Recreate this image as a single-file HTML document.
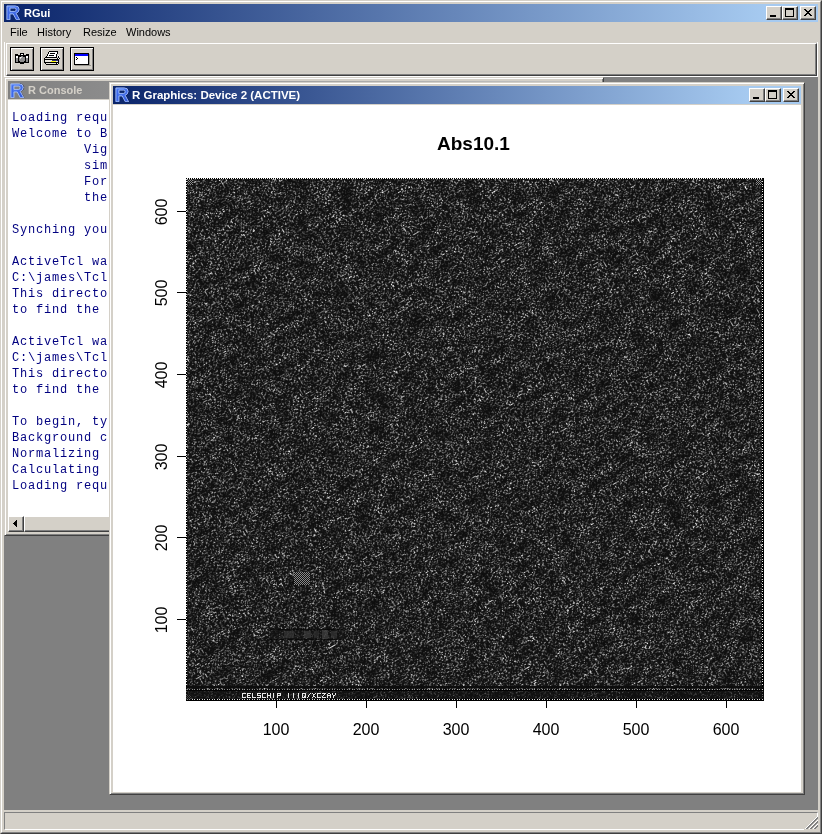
<!DOCTYPE html>
<html><head><meta charset="utf-8">
<style>
*{margin:0;padding:0;box-sizing:border-box}
html,body{width:822px;height:834px;overflow:hidden;background:#d4d0c8;font-family:"Liberation Sans",sans-serif}
.a{position:absolute}
.cap,.mono,.menu,.lab,.ttl{will-change:transform}
.cap{color:#fff;font-weight:bold;font-size:11px;line-height:18px;white-space:nowrap}
.btn{position:absolute;width:16px;height:14px;background:#d4d0c8;border-top:1px solid #fff;border-left:1px solid #fff;border-right:1px solid #404040;border-bottom:1px solid #404040;box-shadow:inset -1px -1px 0 #808080}
.mono{font-family:"Liberation Mono",monospace;font-size:12px;letter-spacing:0.8px;line-height:16px;color:#000080;white-space:pre}
.menu{font-size:11px;color:#000;white-space:nowrap;line-height:13px}
.tb{position:absolute;width:24px;height:24px;border:1px solid #000;background:#d4d0c8;box-shadow:inset 1px 1px 0 #fff, inset -1px -1px 0 #808080}
.lab{font-size:16px;color:#000;white-space:nowrap;line-height:16px}
</style></head><body>
<svg width="0" height="0" style="position:absolute">
<defs>
<linearGradient id="rg1" x1="0" y1="0" x2="1" y2="1"><stop offset="0" stop-color="#5f8cf8"/><stop offset="1" stop-color="#2a52d8"/></linearGradient>
<symbol id="rlg" viewBox="0 0 15 16">
<path fill="none" stroke="#000a40" stroke-width="0.8" stroke-dasharray="0.8 0.8" d="M10.3 0.8Q14.3 1.2 14.2 4.5Q14 7.6 11 8.8L14.8 15.6"/>
<path fill="url(#rg1)" fill-rule="evenodd" stroke="#a8c4ff" stroke-width="0.9" d="M0.9 0.9H9.5Q13.5 0.9 13.5 4.4Q13.5 7.5 10.4 8.5L14 15.1H10.6L7.4 9.2H4.1V15.1H0.9ZM4.1 3.2V6.6H9.1Q10.4 6.6 10.4 4.9Q10.4 3.2 9.1 3.2Z"/>
<path fill="none" stroke="#3a64e8" stroke-width="0.9" d="M2.4 2.6V14.2"/>
</symbol>
</defs></svg>

<div class="a" style="left:0;top:0;width:822px;height:834px;border-top:1px solid #d4d0c8;border-left:1px solid #d4d0c8;border-right:1px solid #404040;border-bottom:1px solid #404040"></div>
<div class="a" style="left:1px;top:1px;width:820px;height:832px;border-top:1px solid #fff;border-left:1px solid #fff;border-right:1px solid #808080;border-bottom:1px solid #808080"></div>
<div class="a" style="left:4px;top:4px;width:814px;height:18px;background:linear-gradient(to right,#0a246a,#a6caf0 93.4%)"></div>
<svg class="a" style="left:6.4px;top:4.6px" width="14.6" height="15.6" viewBox="0 0 15 16" preserveAspectRatio="none"><use href="#rlg"/></svg>
<div class="a cap" style="left:24px;top:4px">RGui</div>
<div class="btn" style="left:766px;top:6px"></div>
<svg class="a" style="left:770px;top:15px;" width="6" height="2" shape-rendering="crispEdges"><path fill="#000" d="M0 0h6v1h-6zM0 1h6v1h-6z"/></svg>
<div class="btn" style="left:782px;top:6px"></div>
<svg class="a" style="left:785px;top:8px;" width="9" height="9" shape-rendering="crispEdges"><path fill="#000" d="M0 0h9v1h-9zM0 1h9v1h-9zM0 2h1v1h-1zM8 2h1v1h-1zM0 3h1v1h-1zM8 3h1v1h-1zM0 4h1v1h-1zM8 4h1v1h-1zM0 5h1v1h-1zM8 5h1v1h-1zM0 6h1v1h-1zM8 6h1v1h-1zM0 7h1v1h-1zM8 7h1v1h-1zM0 8h9v1h-9z"/></svg>
<div class="btn" style="left:800px;top:6px"></div>
<svg class="a" style="left:804px;top:9px;" width="8" height="7" shape-rendering="crispEdges"><path fill="#000" d="M0 0h2v1h-2zM6 0h2v1h-2zM1 1h2v1h-2zM5 1h2v1h-2zM2 2h4v1h-4zM3 3h2v1h-2zM2 4h4v1h-4zM1 5h2v1h-2zM5 5h2v1h-2zM0 6h2v1h-2zM6 6h2v1h-2z"/></svg>
<div class="a menu" style="left:10px;top:26px">File</div>
<div class="a menu" style="left:37px;top:26px">History</div>
<div class="a menu" style="left:83px;top:26px">Resize</div>
<div class="a menu" style="left:126px;top:26px">Windows</div>
<div class="a" style="left:4px;top:42px;width:1px;height:35px;background:#fff"></div>
<div class="a" style="left:817px;top:42px;width:1px;height:35px;background:#fff"></div>
<div class="a" style="left:4px;top:76px;width:814px;height:1px;background:#fff"></div>
<div class="a" style="left:6px;top:43px;width:811px;height:33px;border-top:1px solid #fff;border-left:1px solid #fff;border-right:1px solid #404040;border-bottom:1px solid #404040;box-shadow:inset -1px -1px 0 #808080"></div>
<div class="tb" style="left:10px;top:47px"></div>
<svg class="a" style="left:15px;top:53px;" width="14" height="11" shape-rendering="crispEdges"><path fill="#000" d="M5 0h4v1h-4zM0 1h3v1h-3zM5 1h1v1h-1zM8 1h1v1h-1zM11 1h3v1h-3zM0 2h14v1h-14zM0 3h1v1h-1zM3 3h3v1h-3zM8 3h3v1h-3zM13 3h1v1h-1zM0 4h1v1h-1zM3 4h1v1h-1zM10 4h1v1h-1zM13 4h1v1h-1zM0 5h1v1h-1zM3 5h1v1h-1zM10 5h1v1h-1zM13 5h1v1h-1zM0 6h1v1h-1zM3 6h1v1h-1zM10 6h1v1h-1zM13 6h1v1h-1zM0 7h1v1h-1zM3 7h1v1h-1zM10 7h1v1h-1zM13 7h1v1h-1zM0 8h1v1h-1zM3 8h2v1h-2zM9 8h2v1h-2zM13 8h1v1h-1zM0 9h14v1h-14zM5 10h4v1h-4z"/><path fill="#fff" d="M6 1h2v1h-2zM1 3h2v1h-2zM11 3h2v1h-2zM1 4h2v1h-2zM5 4h1v1h-1zM11 4h2v1h-2z"/><path fill="#8c8c8c" d="M6 3h2v1h-2zM4 4h1v1h-1zM7 4h3v1h-3zM1 5h2v1h-2zM4 5h1v1h-1zM6 5h4v1h-4zM11 5h2v1h-2zM1 6h2v1h-2zM4 6h6v1h-6zM11 6h2v1h-2zM1 7h2v1h-2zM4 7h6v1h-6zM11 7h2v1h-2zM1 8h2v1h-2zM5 8h4v1h-4zM11 8h2v1h-2z"/><path fill="#d8d8d8" d="M6 4h1v1h-1zM5 5h1v1h-1z"/></svg>
<div class="tb" style="left:40px;top:47px"></div>
<svg class="a" style="left:44px;top:51px;" width="16" height="14" shape-rendering="crispEdges"><path fill="#000" d="M5 0h9v1h-9zM4 1h1v1h-1zM13 1h1v1h-1zM4 2h1v1h-1zM6 2h5v1h-5zM13 2h1v1h-1zM3 3h1v1h-1zM12 3h1v1h-1zM3 4h1v1h-1zM5 4h5v1h-5zM12 4h1v1h-1zM2 5h1v1h-1zM12 5h1v1h-1zM14 5h1v1h-1zM1 6h12v1h-12zM14 6h1v1h-1zM0 7h1v1h-1zM13 7h1v1h-1zM15 7h1v1h-1zM0 8h15v1h-15zM0 9h1v1h-1zM14 9h1v1h-1zM0 10h1v1h-1zM14 10h1v1h-1zM0 11h15v1h-15zM1 12h1v1h-1zM12 12h1v1h-1zM14 12h1v1h-1zM2 13h12v1h-12z"/><path fill="#fff" d="M5 1h8v1h-8zM5 2h1v1h-1zM11 2h2v1h-2zM4 3h8v1h-8zM4 4h1v1h-1zM10 4h2v1h-2zM14 4h1v1h-1zM3 5h9v1h-9zM13 5h1v1h-1zM15 5h1v1h-1zM14 7h1v1h-1zM13 12h1v1h-1z"/><path fill="#e8e4dc" d="M1 7h12v1h-12zM1 9h7v1h-7zM1 10h6v1h-6zM12 10h2v1h-2zM2 12h10v1h-10z"/><path fill="#303070" d="M8 9h6v1h-6z"/><path fill="#ffff00" d="M7 10h5v1h-5z"/></svg>
<div class="tb" style="left:70px;top:47px"></div>
<svg class="a" style="left:74px;top:53px;" width="17" height="13" shape-rendering="crispEdges"><path fill="#000" d="M0 0h15v1h-15zM0 1h1v1h-1zM14 1h1v1h-1zM0 2h1v1h-1zM14 2h1v1h-1zM0 3h1v1h-1zM14 3h1v1h-1zM0 4h1v1h-1zM2 4h1v1h-1zM14 4h1v1h-1zM0 5h1v1h-1zM3 5h1v1h-1zM14 5h1v1h-1zM0 6h1v1h-1zM2 6h1v1h-1zM14 6h1v1h-1zM0 7h1v1h-1zM14 7h1v1h-1zM0 8h1v1h-1zM14 8h1v1h-1zM0 9h1v1h-1zM14 9h1v1h-1zM0 10h1v1h-1zM14 10h1v1h-1zM0 11h15v1h-15z"/><path fill="#fff" d="M1 3h13v1h-13zM1 4h1v1h-1zM3 4h11v1h-11zM1 5h2v1h-2zM4 5h10v1h-10zM1 6h1v1h-1zM3 6h11v1h-11zM1 7h13v1h-13zM1 8h13v1h-13zM1 9h13v1h-13zM1 10h13v1h-13z"/><path fill="#0000ff" d="M1 1h13v1h-13zM1 2h13v1h-13z"/><path fill="#9a9890" d="M15 1h1v1h-1zM15 2h1v1h-1zM15 3h1v1h-1zM15 4h1v1h-1zM15 5h1v1h-1zM15 6h1v1h-1zM15 7h1v1h-1zM15 8h1v1h-1zM15 9h1v1h-1zM15 10h1v1h-1zM15 11h1v1h-1zM1 12h16v1h-16z"/></svg>
<div class="a" style="left:4px;top:77px;width:814px;height:733px;background:#808080"></div>
<div class="a" style="left:4px;top:812px;width:814px;height:18px;border-top:1px solid #808080;border-left:1px solid #808080;border-right:1px solid #fff;border-bottom:1px solid #fff"></div>
<svg class="a" style="left:804px;top:817px;" width="14" height="13" shape-rendering="crispEdges"><path fill="#fff" d="M12 0h1v1h-1zM11 1h1v1h-1zM10 2h1v1h-1zM9 3h1v1h-1zM13 3h1v1h-1zM8 4h1v1h-1zM12 4h1v1h-1zM7 5h1v1h-1zM11 5h1v1h-1zM6 6h1v1h-1zM10 6h1v1h-1zM5 7h1v1h-1zM9 7h1v1h-1zM13 7h1v1h-1zM4 8h1v1h-1zM8 8h1v1h-1zM12 8h1v1h-1zM3 9h1v1h-1zM7 9h1v1h-1zM11 9h1v1h-1zM2 10h1v1h-1zM6 10h1v1h-1zM10 10h1v1h-1zM1 11h1v1h-1zM5 11h1v1h-1zM9 11h1v1h-1z"/><path fill="#808080" d="M13 0h1v1h-1zM12 1h2v1h-2zM11 2h2v1h-2zM10 3h2v1h-2zM9 4h2v1h-2zM13 4h1v1h-1zM8 5h2v1h-2zM12 5h2v1h-2zM7 6h2v1h-2zM11 6h2v1h-2zM6 7h2v1h-2zM10 7h2v1h-2zM5 8h2v1h-2zM9 8h2v1h-2zM13 8h1v1h-1zM4 9h2v1h-2zM8 9h2v1h-2zM12 9h2v1h-2zM3 10h2v1h-2zM7 10h2v1h-2zM11 10h2v1h-2zM2 11h2v1h-2zM6 11h2v1h-2zM10 11h2v1h-2z"/><path fill="#d4d0c8" d="M13 2h1v1h-1zM12 3h1v1h-1zM11 4h1v1h-1zM10 5h1v1h-1zM9 6h1v1h-1zM13 6h1v1h-1zM8 7h1v1h-1zM12 7h1v1h-1zM7 8h1v1h-1zM11 8h1v1h-1zM6 9h1v1h-1zM10 9h1v1h-1zM5 10h1v1h-1zM9 10h1v1h-1zM13 10h1v1h-1zM4 11h1v1h-1zM8 11h1v1h-1zM12 11h2v1h-2zM0 12h14v1h-14z"/></svg>
<div class="a" style="left:4px;top:77px;width:600px;height:459px;background:#d4d0c8;border-top:1px solid #d4d0c8;border-left:1px solid #d4d0c8;border-right:1px solid #404040;border-bottom:1px solid #404040;box-shadow:inset 1px 1px 0 #fff, inset -1px -1px 0 #808080"></div>
<div class="a" style="left:8px;top:81px;width:592px;height:18px;background:linear-gradient(to right,#808080,#c0c0c0 91%)"></div>
<svg class="a" style="left:10.4px;top:82.6px" width="14.6" height="15.6" viewBox="0 0 15 16" preserveAspectRatio="none"><use href="#rlg"/></svg>
<div class="a cap" style="left:28px;top:81px;color:#d4d0c8">R Console</div>
<div class="a" style="left:8px;top:100px;width:592px;height:416px;background:#fff;overflow:hidden">
<div style="position:absolute;left:0;top:0;width:100px;height:416px;overflow:hidden"><div class="mono" style="position:absolute;left:4px;top:10px">Loading required package: Biobase
Welcome to Bioconductor
         Vignettes contain introductory material.  To view,
         simply type: openVignette()
         For details on reading vignettes, see
         the openVignette help page.

Synching your local package management information ...

ActiveTcl was not found at C:/james/Tcl
C:\james\Tcl does not exist or does not contain the Tcl lib.
This directory is used by tcltk to find the Tcl/Tk
to find the tcl/tk libraries.

ActiveTcl was not found at C:/james/Tcl
C:\james\Tcl does not exist or does not contain the Tcl lib.
This directory is used by tcltk to find the Tcl/Tk
to find the tcl/tk libraries.

To begin, type help(affy)
Background correcting
Normalizing
Calculating expression
Loading required package: affy</div></div>
</div>
<div class="a" style="left:8px;top:516px;width:592px;height:16px;background:#d4d0c8"></div>
<div class="btn" style="left:8px;top:516px;width:16px;height:16px"></div>
<svg class="a" style="left:13px;top:520px;" width="4" height="7" shape-rendering="crispEdges"><path fill="#000" d="M3 0h1v1h-1zM2 1h2v1h-2zM1 2h3v1h-3zM0 3h4v1h-4zM1 4h3v1h-3zM2 5h2v1h-2zM3 6h1v1h-1z"/></svg>
<div class="btn" style="left:24px;top:516px;width:120px;height:16px"></div>
<div class="a" style="left:109px;top:82px;width:696px;height:713px;background:#d4d0c8;border-top:1px solid #d4d0c8;border-left:1px solid #d4d0c8;border-right:1px solid #404040;border-bottom:1px solid #404040;box-shadow:inset 1px 1px 0 #fff, inset -1px -1px 0 #808080"></div>
<div class="a" style="left:113px;top:86px;width:688px;height:18px;background:linear-gradient(to right,#0a246a,#a6caf0 92.2%)"></div>
<svg class="a" style="left:115.4px;top:86.6px" width="14.6" height="15.6" viewBox="0 0 15 16" preserveAspectRatio="none"><use href="#rlg"/></svg>
<div class="a cap" style="left:132px;top:86px;font-size:11.5px">R Graphics: Device 2 (ACTIVE)</div>
<div class="btn" style="left:749px;top:88px"></div>
<svg class="a" style="left:753px;top:97px;" width="6" height="2" shape-rendering="crispEdges"><path fill="#000" d="M0 0h6v1h-6zM0 1h6v1h-6z"/></svg>
<div class="btn" style="left:765px;top:88px"></div>
<svg class="a" style="left:768px;top:90px;" width="9" height="9" shape-rendering="crispEdges"><path fill="#000" d="M0 0h9v1h-9zM0 1h9v1h-9zM0 2h1v1h-1zM8 2h1v1h-1zM0 3h1v1h-1zM8 3h1v1h-1zM0 4h1v1h-1zM8 4h1v1h-1zM0 5h1v1h-1zM8 5h1v1h-1zM0 6h1v1h-1zM8 6h1v1h-1zM0 7h1v1h-1zM8 7h1v1h-1zM0 8h9v1h-9z"/></svg>
<div class="btn" style="left:783px;top:88px"></div>
<svg class="a" style="left:787px;top:91px;" width="8" height="7" shape-rendering="crispEdges"><path fill="#000" d="M0 0h2v1h-2zM6 0h2v1h-2zM1 1h2v1h-2zM5 1h2v1h-2zM2 2h4v1h-4zM3 3h2v1h-2zM2 4h4v1h-4zM1 5h2v1h-2zM5 5h2v1h-2zM0 6h2v1h-2zM6 6h2v1h-2z"/></svg>
<div class="a" style="left:113px;top:105px;width:688px;height:687px;background:#fff"></div>
<svg class="a" style="left:186px;top:178px" width="578" height="523">
<defs>
<filter id="nz" x="-300" y="-300" width="1600" height="1600" color-interpolation-filters="sRGB" filterUnits="userSpaceOnUse">
<feTurbulence type="fractalNoise" baseFrequency="0.055 0.12" numOctaves="4" seed="5" result="t1"/>
<feColorMatrix in="t1" type="matrix" values="1.25 0 0 0 -0.12  1.25 0 0 0 -0.12  1.25 0 0 0 -0.12  0 0 0 0 1" result="m"/>
<feTurbulence type="fractalNoise" baseFrequency="0.55 0.75" numOctaves="2" seed="9" result="t2"/>
<feColorMatrix in="t2" type="matrix" values="5.5 0 0 0 -2.91  5.5 0 0 0 -2.91  5.5 0 0 0 -2.91  0 0 0 0 1" result="s"/>
<feComposite in="m" in2="s" operator="arithmetic" k1="1.05" k2="0.03" k3="0.03" k4="0.05"/>
</filter>
</defs>
<g transform="rotate(-30 289 262)"><rect x="-400" y="-400" width="1400" height="1400" filter="url(#nz)"/></g>
</svg>
<svg class="a" style="left:186px;top:178px" width="578" height="523" shape-rendering="crispEdges">
<defs>
<pattern id="chk2" width="2" height="2" patternUnits="userSpaceOnUse"><rect width="2" height="2" fill="#111"/><rect width="1" height="1" fill="#888"/><rect x="1" y="1" width="1" height="1" fill="#888"/></pattern>
<pattern id="hd" width="2" height="1" patternUnits="userSpaceOnUse"><rect width="1" height="1" fill="#000"/><rect x="1" width="1" height="1" fill="#fff"/></pattern>
<pattern id="vd" width="1" height="2" patternUnits="userSpaceOnUse"><rect width="1" height="1" fill="#000"/><rect y="1" width="1" height="1" fill="#fff"/></pattern>
<pattern id="hd2" width="5" height="1" patternUnits="userSpaceOnUse"><rect width="5" height="1" fill="#000"/><rect x="1" width="1" height="1" fill="#e0e0e0"/><rect x="3" width="1" height="1" fill="#e0e0e0"/></pattern>
<pattern id="vd2" width="1" height="5" patternUnits="userSpaceOnUse"><rect width="1" height="5" fill="#000"/><rect y="1" width="1" height="1" fill="#e0e0e0"/><rect y="3" width="1" height="1" fill="#e0e0e0"/></pattern>
</defs>
<rect x="0" y="0" width="578" height="1" fill="url(#hd)"/>
<rect x="0" y="0" width="1" height="523" fill="url(#vd2)"/>
<rect x="577" y="0" width="1" height="523" fill="#000"/>
<rect x="576" y="2" width="1" height="520" fill="url(#vd2)"/>
<rect x="0" y="522" width="578" height="1" fill="#000"/>
<rect x="0" y="521" width="577" height="1" fill="url(#hd2)"/>
<rect x="0" y="517" width="5" height="5" fill="url(#chk2)"/>
<rect x="1" y="1" width="6" height="6" fill="url(#chk2)"/>
<rect x="570" y="1" width="6" height="6" fill="url(#chk2)"/>
<rect x="0" y="508" width="578" height="2" fill="#0c0c0c"/>
<rect x="0" y="511" width="578" height="1" fill="url(#hd2)" opacity="0.6"/>
<rect x="0" y="512" width="578" height="1" fill="#050505"/>
<rect x="0" y="513" width="578" height="8" fill="#101010" opacity="0.6"/>
<rect x="108" y="394" width="16" height="13" fill="url(#chk2)"/>
<rect x="84" y="451" width="74" height="1" fill="#050505" opacity="0.7"/>
<rect x="84" y="452" width="74" height="9" fill="#141414" opacity="0.55"/>
<rect x="98" y="453" width="10" height="7" fill="#3a3a3a" opacity="0.6"/>
<rect x="118" y="453" width="7" height="7" fill="#444" opacity="0.6"/>
<rect x="128" y="453" width="5" height="7" fill="#333" opacity="0.6"/>
<rect x="136" y="452" width="6" height="9" fill="#4a4a4a" opacity="0.6"/>
<rect x="145" y="453" width="6" height="7" fill="#3a3a3a" opacity="0.6"/>
<rect x="84" y="461" width="74" height="1" fill="#050505" opacity="0.7"/>
</svg>
<svg class="a" style="left:242px;top:693px;" width="95" height="5" shape-rendering="crispEdges"><path fill="#e8e8e8" d="M0 0h4v1h-4zM5 0h4v1h-4zM10 0h1v1h-1zM15 0h4v1h-4zM20 0h4v1h-4zM25 0h1v1h-1zM28 0h1v1h-1zM31 0h1v1h-1zM35 0h4v1h-4zM46 0h1v1h-1zM51 0h1v1h-1zM56 0h1v1h-1zM60 0h4v1h-4zM68 0h1v1h-1zM70 0h1v1h-1zM73 0h1v1h-1zM75 0h4v1h-4zM80 0h4v1h-4zM86 0h2v1h-2zM90 0h1v1h-1zM93 0h1v1h-1zM0 1h1v1h-1zM5 1h1v1h-1zM10 1h1v1h-1zM15 1h1v1h-1zM20 1h1v1h-1zM25 1h1v1h-1zM28 1h1v1h-1zM31 1h1v1h-1zM35 1h1v1h-1zM38 1h1v1h-1zM46 1h1v1h-1zM51 1h1v1h-1zM56 1h1v1h-1zM60 1h1v1h-1zM63 1h1v1h-1zM67 1h1v1h-1zM71 1h2v1h-2zM75 1h1v1h-1zM82 1h1v1h-1zM85 1h1v1h-1zM88 1h1v1h-1zM90 1h1v1h-1zM93 1h1v1h-1zM0 2h1v1h-1zM5 2h3v1h-3zM10 2h1v1h-1zM15 2h4v1h-4zM20 2h1v1h-1zM25 2h4v1h-4zM31 2h1v1h-1zM35 2h4v1h-4zM46 2h1v1h-1zM51 2h1v1h-1zM56 2h1v1h-1zM60 2h1v1h-1zM63 2h1v1h-1zM66 2h1v1h-1zM71 2h1v1h-1zM75 2h1v1h-1zM81 2h1v1h-1zM85 2h4v1h-4zM91 2h2v1h-2zM0 3h1v1h-1zM5 3h1v1h-1zM10 3h1v1h-1zM18 3h1v1h-1zM20 3h1v1h-1zM25 3h1v1h-1zM28 3h1v1h-1zM31 3h1v1h-1zM35 3h1v1h-1zM46 3h1v1h-1zM51 3h1v1h-1zM56 3h1v1h-1zM60 3h1v1h-1zM62 3h2v1h-2zM66 3h1v1h-1zM71 3h2v1h-2zM75 3h1v1h-1zM80 3h1v1h-1zM85 3h1v1h-1zM88 3h1v1h-1zM91 3h1v1h-1zM0 4h4v1h-4zM5 4h4v1h-4zM10 4h4v1h-4zM15 4h4v1h-4zM20 4h4v1h-4zM25 4h1v1h-1zM28 4h1v1h-1zM31 4h1v1h-1zM35 4h1v1h-1zM46 4h1v1h-1zM51 4h1v1h-1zM56 4h1v1h-1zM60 4h4v1h-4zM65 4h1v1h-1zM70 4h1v1h-1zM73 4h1v1h-1zM75 4h4v1h-4zM80 4h4v1h-4zM85 4h1v1h-1zM88 4h1v1h-1zM91 4h1v1h-1z"/></svg>
<div class="a ttl" style="left:437px;top:132px;font-size:19px;font-weight:bold;line-height:24px">Abs10.1</div>
<div class="a" style="left:276px;top:701px;width:1px;height:7px;background:#000"></div>
<div class="a lab" style="left:236.3px;top:722px;width:80px;text-align:center">100</div>
<div class="a" style="left:366px;top:701px;width:1px;height:7px;background:#000"></div>
<div class="a lab" style="left:326.3px;top:722px;width:80px;text-align:center">200</div>
<div class="a" style="left:456px;top:701px;width:1px;height:7px;background:#000"></div>
<div class="a lab" style="left:416.3px;top:722px;width:80px;text-align:center">300</div>
<div class="a" style="left:546px;top:701px;width:1px;height:7px;background:#000"></div>
<div class="a lab" style="left:506.3px;top:722px;width:80px;text-align:center">400</div>
<div class="a" style="left:636px;top:701px;width:1px;height:7px;background:#000"></div>
<div class="a lab" style="left:596.3px;top:722px;width:80px;text-align:center">500</div>
<div class="a" style="left:726px;top:701px;width:1px;height:7px;background:#000"></div>
<div class="a lab" style="left:686.3px;top:722px;width:80px;text-align:center">600</div>
<div class="a" style="left:177px;top:619px;width:9px;height:1px;background:#000"></div>
<div class="a lab" style="left:122.0px;top:612.1px;width:80px;text-align:center;transform:rotate(-90deg)">100</div>
<div class="a" style="left:177px;top:537px;width:9px;height:1px;background:#000"></div>
<div class="a lab" style="left:122.0px;top:530.4px;width:80px;text-align:center;transform:rotate(-90deg)">200</div>
<div class="a" style="left:177px;top:456px;width:9px;height:1px;background:#000"></div>
<div class="a lab" style="left:122.0px;top:448.7px;width:80px;text-align:center;transform:rotate(-90deg)">300</div>
<div class="a" style="left:177px;top:374px;width:9px;height:1px;background:#000"></div>
<div class="a lab" style="left:122.0px;top:366.9px;width:80px;text-align:center;transform:rotate(-90deg)">400</div>
<div class="a" style="left:177px;top:292px;width:9px;height:1px;background:#000"></div>
<div class="a lab" style="left:122.0px;top:285.2px;width:80px;text-align:center;transform:rotate(-90deg)">500</div>
<div class="a" style="left:177px;top:211px;width:9px;height:1px;background:#000"></div>
<div class="a lab" style="left:122.0px;top:203.5px;width:80px;text-align:center;transform:rotate(-90deg)">600</div>
</body></html>
